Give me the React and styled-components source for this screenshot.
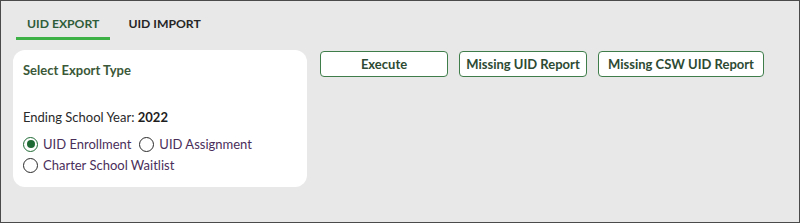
import styled, { createGlobalStyle } from "styled-components";

const Global = createGlobalStyle`
  html, body {
    margin: 0;
    padding: 0;
    background: #fff;
  }
  * {
    box-sizing: border-box;
  }
`;

const Page = styled.div`
  width: 800px;
  height: 223px;
  background: #e8e8e8;
  border: 1px solid #4a4a4a;
  font-family: Lato, "Open Sans", sans-serif;
  padding: 0 12px;
`;

const Tabs = styled.div`
  display: flex;
  gap: 7px;
  padding-left: 3px;
  height: 49px;
  padding-top: 14px;
`;

const Tab = styled.div`
  padding: 0 11px;
  height: 25px;
  font-size: 12.2px;
  font-weight: 700;
  color: ${(p) => (p.$active ? "#2f5d3a" : "#262626")};
  border-bottom: 3px solid ${(p) => (p.$active ? "#3db146" : "transparent")};
  line-height: 18px;
`;

const Row = styled.div`
  display: flex;
  align-items: flex-start;
  gap: 13px;
`;

const Card = styled.div`
  width: 294px;
  height: 137px;
  background: #fff;
  border-radius: 12px;
  padding: 12px 10px;
  display: flex;
  flex-direction: column;
`;

const Title = styled.div`
  font-size: 13px;
  font-weight: 700;
  color: #3b5838;
  margin-bottom: 31px;
`;

const Year = styled.div`
  font-size: 13px;
  color: #2a2a2a;
  margin-bottom: 10px;
  b {
    color: #1e1e1e;
  }
`;

const Radios = styled.div`
  display: flex;
  flex-wrap: wrap;
  row-gap: 3px;
  column-gap: 8px;
`;

const RadioLabel = styled.label`
  display: flex;
  align-items: center;
  gap: 5px;
  font-size: 13px;
  color: #4a2e5a;
  height: 18px;
`;

const Dot = styled.span`
  width: 15px;
  height: 15px;
  border-radius: 50%;
  border: 1.5px solid ${(p) => (p.$on ? "#1f6b35" : "#2a2a2a")};
  display: flex;
  align-items: center;
  justify-content: center;
  &::after {
    content: "";
    width: 8px;
    height: 8px;
    border-radius: 50%;
    background: ${(p) => (p.$on ? "#1f6b35" : "transparent")};
  }
`;

const Buttons = styled.div`
  display: flex;
  gap: 11px;
  padding-top: 1px;
`;

const Button = styled.button`
  height: 26px;
  width: ${(p) => p.$w}px;
  background: #fff;
  border: 1px solid #3f7d4a;
  border-radius: 4px;
  font-family: Lato, "Open Sans", sans-serif;
  font-size: 13px;
  font-weight: 700;
  color: #2d4a33;
  padding: 0;
`;

function Radio({ on, children }) {
  return (
    <RadioLabel>
      <Dot $on={on} />
      {children}
    </RadioLabel>
  );
}

export default function App() {
  return (
    <>
      <Global />
      <Page>
        <Tabs>
          <Tab $active>UID EXPORT</Tab>
          <Tab>UID IMPORT</Tab>
        </Tabs>
        <Row>
          <Card>
            <Title>Select Export Type</Title>
            <Year>
              Ending School Year: <b>2022</b>
            </Year>
            <Radios>
              <Radio on>UID Enrollment</Radio>
              <Radio>UID Assignment</Radio>
              <Radio>Charter School Waitlist</Radio>
            </Radios>
          </Card>
          <Buttons>
            <Button $w={128}>Execute</Button>
            <Button $w={128}>Missing UID Report</Button>
            <Button $w={166}>Missing CSW UID Report</Button>
          </Buttons>
        </Row>
      </Page>
    </>
  );
}
